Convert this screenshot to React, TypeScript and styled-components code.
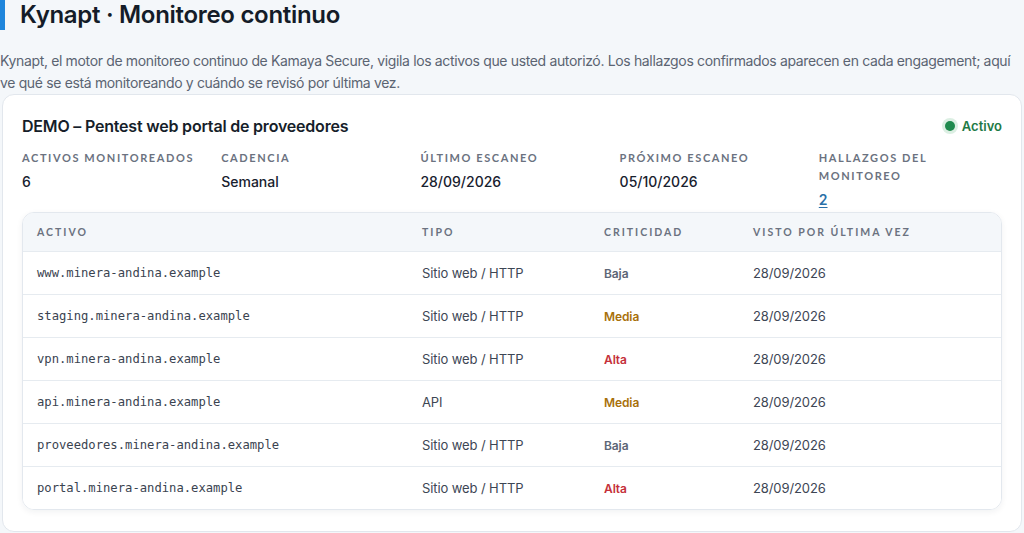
import React from "react";
import styled, { createGlobalStyle } from "styled-components";

const GlobalStyle = createGlobalStyle`
  * { box-sizing: border-box; }
  html, body { margin: 0; padding: 0; background: #f4f7fa; }
  body { font-family: "Inter", "Noto Sans", sans-serif; color: #18212e; overflow: hidden; }
`;

const Page = styled.div`
  width: 1022px;
  display: flex;
  flex-direction: column;
`;

const TitleRow = styled.div`
  display: flex;
  align-items: center;
  gap: 15px;
  height: 32px;
  margin-top: -2px;
`;

const AccentBar = styled.span`
  width: 5px;
  align-self: stretch;
  background: #1f86dc;
`;

const Title = styled.h1`
  margin: 0;
  font-size: 24px;
  font-weight: 600;
  letter-spacing: -0.3px;
  color: #141c28;
`;

const Intro = styled.p`
  margin: 20px 0 0 0;
  font-size: 14px;
  line-height: 22px;
  letter-spacing: -0.35px;
  color: #5b6472;
`;

const Card = styled.section`
  margin-left: 2px;
  background: #ffffff;
  border: 1px solid #e2e7ed;
  border-radius: 12px;
  padding: 20px 19px 21px 19px;
  display: flex;
  flex-direction: column;
`;

const CardHead = styled.div`
  display: flex;
  align-items: center;
  justify-content: space-between;
`;

const CardTitle = styled.h2`
  margin: 0;
  font-size: 16px;
  line-height: 22px;
  font-weight: 600;
  letter-spacing: -0.2px;
  color: #161e2a;
`;

const Status = styled.div`
  display: flex;
  align-items: center;
  gap: 7px;
  font-size: 13px;
  font-weight: 600;
  color: #1e7a46;
`;

const Dot = styled.span`
  width: 10px;
  height: 10px;
  border-radius: 50%;
  background: #1f8a4e;
  box-shadow: 0 0 0 3px #dcefe3;
`;

const Stats = styled.div`
  display: grid;
  grid-template-columns: repeat(5, 1fr);
  column-gap: 16px;
  margin-top: 12px;
`;

const Stat = styled.div`
  display: flex;
  flex-direction: column;
  gap: 5px;
`;

const StatLabel = styled.div`
  font-family: "Lato", "Noto Sans", sans-serif;
  font-size: 11px;
  line-height: 18px;
  font-weight: 700;
  letter-spacing: 1.6px;
  text-transform: uppercase;
  color: #6b7280;
`;

const StatValue = styled.div`
  font-size: 14px;
  line-height: 20px;
  font-weight: 500;
  color: #18212e;
`;

const StatLink = styled.a`
  font-size: 14px;
  line-height: 20px;
  font-weight: 600;
  color: #2a70a8;
  text-decoration: underline;
  text-underline-offset: 2px;
`;

const Table = styled.div`
  margin-top: 2px;
  border: 1px solid #e3e8ee;
  border-radius: 12px;
  overflow: hidden;
  box-shadow: 0 2px 6px rgba(20, 30, 50, 0.06);
`;

const Row = styled.div<{ $head?: boolean }>`
  display: grid;
  grid-template-columns: 385px 182px 149px 1fr;
  align-items: center;
  height: ${(p) => (p.$head ? "38px" : "43px")};
  background: ${(p) => (p.$head ? "#f4f7fa" : "#ffffff")};
  border-top: ${(p) => (p.$head ? "none" : "1px solid #e6ebf0")};
`;

const HeadCell = styled.div`
  padding-left: 14px;
  font-family: "Lato", "Noto Sans", sans-serif;
  font-size: 10.5px;
  font-weight: 700;
  letter-spacing: 2px;
  text-transform: uppercase;
  color: #6b7280;
`;

const Cell = styled.div`
  padding-left: 14px;
  font-size: 13px;
  color: #3d4654;
  letter-spacing: -0.1px;
`;

const MonoCell = styled(Cell)`
  font-family: "DejaVu Sans Mono", "Liberation Mono", monospace;
  font-size: 12.2px;
  letter-spacing: 0;
  color: #3a4350;
`;

const levelColor: Record<string, string> = {
  Baja: "#5d6676",
  Media: "#a8700a",
  Alta: "#c5303a",
};

const Level = styled(Cell)<{ $level: string }>`
  font-size: 12px;
  font-weight: 600;
  color: ${(p) => levelColor[p.$level]};
`;

const assets = [
  { host: "www.minera-andina.example", tipo: "Sitio web / HTTP", crit: "Baja" },
  { host: "staging.minera-andina.example", tipo: "Sitio web / HTTP", crit: "Media" },
  { host: "vpn.minera-andina.example", tipo: "Sitio web / HTTP", crit: "Alta" },
  { host: "api.minera-andina.example", tipo: "API", crit: "Media" },
  { host: "proveedores.minera-andina.example", tipo: "Sitio web / HTTP", crit: "Baja" },
  { host: "portal.minera-andina.example", tipo: "Sitio web / HTTP", crit: "Alta" },
];

export default function App() {
  return (
    <>
      <GlobalStyle />
      <Page>
        <TitleRow>
          <AccentBar />
          <Title>Kynapt · Monitoreo continuo</Title>
        </TitleRow>
        <Intro>
          Kynapt, el motor de monitoreo continuo de Kamaya Secure, vigila los activos que usted autorizó. Los hallazgos
          confirmados aparecen en cada engagement; aquí ve qué se está monitoreando y cuándo se revisó por última vez.
        </Intro>
        <Card>
          <CardHead>
            <CardTitle>DEMO – Pentest web portal de proveedores</CardTitle>
            <Status>
              <Dot />
              Activo
            </Status>
          </CardHead>
          <Stats>
            <Stat>
              <StatLabel>Activos monitoreados</StatLabel>
              <StatValue>6</StatValue>
            </Stat>
            <Stat>
              <StatLabel>Cadencia</StatLabel>
              <StatValue>Semanal</StatValue>
            </Stat>
            <Stat>
              <StatLabel>Último escaneo</StatLabel>
              <StatValue>28/09/2026</StatValue>
            </Stat>
            <Stat>
              <StatLabel>Próximo escaneo</StatLabel>
              <StatValue>05/10/2026</StatValue>
            </Stat>
            <Stat>
              <StatLabel>Hallazgos del monitoreo</StatLabel>
              <StatLink href="#">2</StatLink>
            </Stat>
          </Stats>
          <Table>
            <Row $head>
              <HeadCell>Activo</HeadCell>
              <HeadCell>Tipo</HeadCell>
              <HeadCell>Criticidad</HeadCell>
              <HeadCell>Visto por última vez</HeadCell>
            </Row>
            {assets.map((a) => (
              <Row key={a.host}>
                <MonoCell>{a.host}</MonoCell>
                <Cell>{a.tipo}</Cell>
                <Level $level={a.crit}>{a.crit}</Level>
                <Cell>28/09/2026</Cell>
              </Row>
            ))}
          </Table>
        </Card>
      </Page>
    </>
  );
}
